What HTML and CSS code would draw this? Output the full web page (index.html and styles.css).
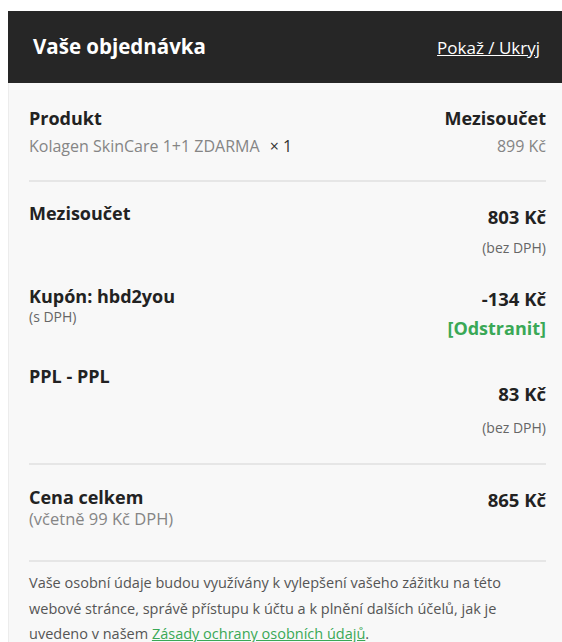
FILE: index.html
```html
<!DOCTYPE html>
<html lang="cs">
<head>
<meta charset="utf-8">
<link rel="stylesheet" href="styles.css">
</head>
<body>
<div class="order">
  <div class="header">
    <h2 class="title">Vaše objednávka</h2>
    <a class="toggle" href="#">Pokaž / Ukryj</a>
  </div>
  <div class="panel">
    <div class="row head">
      <div class="left">
        <div class="label">Produkt</div>
        <div class="item">Kolagen SkinCare 1+1 ZDARMA <span class="qty">× 1</span></div>
      </div>
      <div class="right">
        <div class="label">Mezisoučet</div>
        <div class="item">899 Kč</div>
      </div>
    </div>
    <div class="divider"></div>
    <div class="row subtotal">
      <div class="left"><div class="label">Mezisoučet</div></div>
      <div class="right">
        <div class="amount">803 Kč</div>
        <div class="note">(bez DPH)</div>
      </div>
    </div>
    <div class="row coupon">
      <div class="left">
        <div class="label">Kupón: hbd2you</div>
        <div class="note">(s DPH)</div>
      </div>
      <div class="right">
        <div class="amount">-134 Kč</div>
        <a class="remove" href="#">[Odstranit]</a>
      </div>
    </div>
    <div class="row shipping">
      <div class="left"><div class="label">PPL - PPL</div></div>
      <div class="right">
        <div class="amount">83 Kč</div>
        <div class="note">(bez DPH)</div>
      </div>
    </div>
    <div class="divider"></div>
    <div class="row total">
      <div class="left">
        <div class="label">Cena celkem</div>
        <div class="vat">(včetně 99 Kč DPH)</div>
      </div>
      <div class="right"><div class="amount">865 Kč</div></div>
    </div>
    <div class="divider"></div>
    <p class="privacy">Vaše osobní údaje budou využívány k vylepšení vašeho zážitku na této webové stránce, správě přístupu k účtu a k plnění dalších účelů, jak je uvedeno v našem <a class="policy" href="#">Zásady ochrany osobních údajů</a>.</p>
  </div>
</div>
</body>
</html>
```
FILE: styles.css
```css
html, body {
  margin: 0;
  padding: 0;
  background: #ffffff;
}
body {
  font-family: "Open Sans", "Noto Sans", sans-serif;
  color: #222222;
  overflow: hidden;
}
.order {
  margin: 11px 0 0 8px;
}
.header {
  background: #262626;
  height: 72px;
  display: flex;
  align-items: center;
  justify-content: space-between;
  padding: 0 22px 0 25px;
}
.title {
  margin: 0 0 2px;
  color: #ffffff;
  font-size: 20.5px;
  font-weight: 700;
}
.toggle {
  color: #ffffff;
  font-size: 17px;
  text-decoration: underline;
}
.panel {
  background: #f8f8f8;
  border-left: 1px solid #ececec;
  padding: 0 16px 20px 20px;
}
.row {
  display: flex;
  justify-content: space-between;
}
.right {
  text-align: right;
}
.label {
  font-size: 18px;
  font-weight: 700;
  line-height: 26px;
}
.item {
  font-size: 16px;
  color: #858585;
  line-height: 28px;
  margin-top: 1px;
}
.qty {
  color: #333333;
  margin-left: 6px;
}
.head {
  padding-top: 22px;
  padding-bottom: 20px;
}
.divider {
  height: 2px;
  background: #e6e6e6;
}
.amount {
  font-size: 18.5px;
  font-weight: 700;
  line-height: 26px;
}
.note {
  font-size: 14px;
  color: #666666;
  line-height: 20px;
}
.subtotal {
  padding-top: 18px;
}
.subtotal .amount {
  margin-top: 4px;
}
.subtotal .note {
  margin-top: 8px;
}
.coupon {
  padding-top: 25px;
}
.coupon .left .note {
  line-height: 16px;
}
.coupon .amount {
  margin-top: 3px;
}
.remove {
  display: block;
  color: #3aa856;
  font-size: 18px;
  font-weight: 700;
  text-decoration: none;
  line-height: 32px;
}
.shipping {
  padding-top: 19px;
  padding-bottom: 25px;
}
.shipping .amount {
  margin-top: 18px;
}
.shipping .note {
  margin-top: 11px;
}
.total {
  padding-top: 19px;
  padding-bottom: 32px;
}
.total .amount {
  margin-top: 3px;
}
.vat {
  font-size: 16.5px;
  color: #858585;
  line-height: 18px;
}
.privacy {
  margin: 8px 0 0;
  max-width: 490px;
  font-size: 14.5px;
  line-height: 25.5px;
  color: #555555;
}
.policy {
  color: #3aa856;
  text-decoration: underline;
}
```
